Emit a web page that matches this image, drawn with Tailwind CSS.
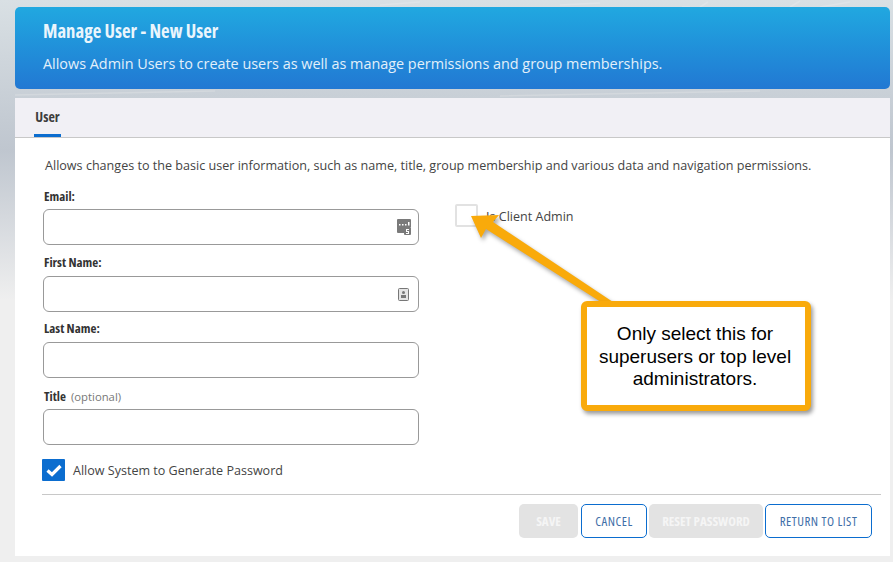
<!DOCTYPE html>
<html lang="en">

<head>
    <meta charset="UTF-8" />
    <meta name="viewport" content="width=device-width, initial-scale=1.0" />
    <title>Manage User</title>
    <script src="https://cdn.jsdelivr.net/npm/@tailwindcss/browser@4"></script>
</head>

<body class="relative w-[893px] h-[562px] overflow-hidden bg-[#efefef] font-['Open_Sans',sans-serif] text-[#333]">

    <!-- background photo, approximated -->
    <div class="absolute top-0 left-0 w-full h-[300px] bg-gradient-to-b from-[#d9e0e4] via-[#bfc6cf] to-[#efefef]"></div>
    <svg class="absolute top-0 left-0" width="893" height="100" fill="none" stroke="#dfe4e8" stroke-width="1.500">
        <path d="M690 7l-8 0M700 7l8-5M790 7l10-6M820 7l30-5M380 5l40-3M560 5l40-2" />
        <path d="M15 95l200-4M500 96l260-5" stroke="#d3d8dd" />
    </svg>

    <div class="relative pt-[7px] pl-[15px] w-[890px]">
        <header class="h-[82px] rounded-[5px] bg-gradient-to-b from-[#21a8e0] to-[#2278d3] pl-[28px] text-white">
            <h1 class="pt-[12px] h-[38px] text-[18.700px] leading-[24px] font-bold font-stretch-condensed text-[#eaf5fc]">Manage User - New User</h1>
            <p class="pt-[9px] text-[14.4px] leading-[20px] text-[#e3f0fa]">Allows Admin Users to create users as well as manage permissions and group memberships.</p>
        </header>

        <main class="mt-[9px] h-[458px] bg-white">
            <div class="h-[40px] bg-[#f1f0f5] border-b border-[#c8c8c8] pl-[19px]">
                <div class="w-[27px] h-[39px] border-b-[3px] border-[#0b6dcf] text-center text-[14px] leading-[38px] font-bold font-stretch-condensed text-[#3d3d3d]">User</div>
            </div>

            <div class="pl-[27px] pr-[9px]">
                <p class="pl-[3px] pt-[19px] h-[50px] text-[12.58px] leading-[18px] text-[#444]">Allows changes to the basic user information, such as name, title, group membership and various data and navigation permissions.</p>

                <div class="flex h-[306px]">
                    <div class="pl-[1px] w-[412px]">
                        <label class="block pl-[1px] -mt-[1px] h-[22px] text-[13px] leading-[18px] font-bold font-stretch-condensed">Email:</label>
                        <div class="flex items-center justify-end pr-[7px] w-[376px] h-[36px] rounded-[6px] border border-[#999]">
                            <svg width="14" height="16" viewBox="0 0 14 16" fill="#7a7a7a">
                                <path d="M1 0h12a1 1 0 0 1 1 1v7H8v6H1a1 1 0 0 1-1-1V1a1 1 0 0 1 1-1z" />
                                <rect x="7" y="8" width="7" height="8" rx="1" />
                                <path fill="#fff" d="M2 5h1.500v1.500H2zM5 5h1.500v1.500H5zM8 5h1.500v1.500H8zM11 3h1.500v3.500H11zM9 10h3v1H10v1h2v3H9v-1h2v-1H9z" />
                            </svg>
                        </div>
                        <label class="block pl-[1px] pt-[8px] h-[31px] text-[13px] leading-[18px] font-bold font-stretch-condensed">First Name:</label>
                        <div class="flex items-center justify-end pr-[9px] w-[376px] h-[36px] rounded-[6px] border border-[#999]">
                            <svg width="11" height="13" viewBox="0 0 11 13" fill="none">
                                <rect x="0.500" y="0.500" width="10" height="12" rx="1" fill="#e4e4e4" stroke="#777" />
                                <circle cx="5.500" cy="4.500" r="1.500" fill="#777" />
                                <rect x="3" y="7" width="5" height="3" fill="#777" />
                            </svg>
                        </div>
                        <label class="block pl-[1px] pt-[7px] h-[30px] text-[13px] leading-[18px] font-bold font-stretch-condensed">Last Name:</label>
                        <div class="w-[376px] h-[36px] rounded-[6px] border border-[#999]"></div>
                        <label class="flex items-baseline gap-[5px] pl-[1px] pt-[9px] h-[31px] text-[13px] leading-[18px] font-bold font-stretch-condensed">Title <span class="text-[11.300px] font-normal font-stretch-normal text-[#777]">(optional)</span></label>
                        <div class="w-[376px] h-[36px] rounded-[6px] border border-[#999]"></div>
                        <div class="flex items-center mt-[14px] -ml-[1px]">
                            <span class="flex items-center justify-center w-[23px] h-[22px] rounded-[1px] bg-[#0b6dcf]">
                                <svg width="16" height="13" viewBox="0 0 16 13" fill="none" stroke="#fff" stroke-width="3.200">
                                    <path d="M1.500 6.500l4.500 4 8.500-8.500" />
                                </svg>
                            </span>
                            <span class="ml-[8px] pt-[2px] text-[12.56px] leading-[18px] text-[#444]">Allow System to Generate Password</span>
                        </div>
                    </div>
                    <div class="flex items-start pt-[16px]">
                        <span class="ml-[1px] w-[23px] h-[23px] rounded-[2px] border-2 border-[#e2e2e2]"></span>
                        <span class="ml-[8px] pt-[4px] text-[12.56px] leading-[18px] text-[#444]">Is Client Admin</span>
                    </div>
                </div>

                <div class="h-[1px] bg-[#c8c8c8]"></div>
                <div class="flex justify-end pt-[9px] pr-[9px] text-[13px] leading-[33px] font-bold font-stretch-condensed">
                    <button class="w-[59px] h-[34px] rounded-[5px] bg-[#e3e3e3] text-[#f5f5f5]">SAVE</button>
                    <button class="ml-[3px] w-[66px] h-[34px] rounded-[5px] border border-[#0b6dcf] text-[#3f6fa8] font-normal tracking-[0.5px]">CANCEL</button>
                    <button class="ml-[2px] w-[114px] h-[34px] rounded-[5px] bg-[#e3e3e3] text-[#f5f5f5]">RESET PASSWORD</button>
                    <button class="ml-[2px] w-[107px] h-[34px] rounded-[5px] border border-[#0b6dcf] text-[#3f6fa8] font-normal tracking-[0.5px]">RETURN TO LIST</button>
                </div>
            </div>
        </main>
    </div>

    <!-- annotation arrow + callout -->
    <svg class="absolute top-0 left-0 drop-shadow-[2px_3px_2px_rgba(0,0,0,0.35)]" width="893" height="562" fill="#f9aa0b">
        <path d="M471 216l28-1-6 7 120 80-9 2-118-75-5 9z" />
    </svg>
    <div class="absolute left-[581px] top-[301px] flex items-center justify-center w-[230px] h-[110px] pr-[2px] pt-[2px] rounded-[6px] border-[6px] border-[#f9aa0b] bg-white shadow-[2px_3px_4px_rgba(0,0,0,0.4)] text-center font-['Liberation_Sans',sans-serif] text-[19px] leading-[22.500px] text-black">
        <p>Only select this for<br />superusers or top level<br />administrators.</p>
    </div>

</body>

</html>
